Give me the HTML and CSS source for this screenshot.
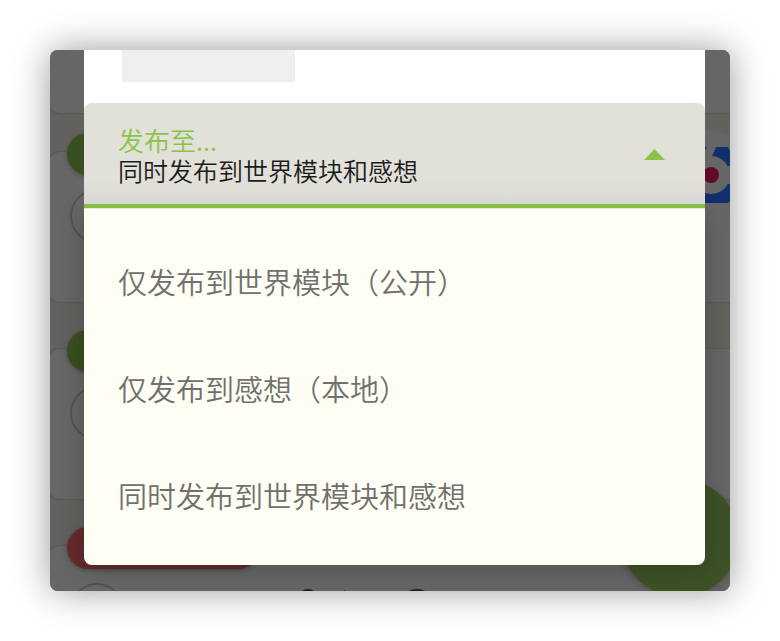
FILE: index.html
```html
<!DOCTYPE html>
<html lang="zh-CN">
<head>
<meta charset="utf-8">
<meta name="viewport" content="width=device-width, initial-scale=1">
<title>发布至</title>
<link rel="stylesheet" href="styles.css">
</head>
<body>
<main class="stage">
  <div class="feed" aria-hidden="true">
    <div class="card card-first"></div>
    <div class="card">
      <span class="chip"></span>
      <span class="avatar"></span>
      <svg class="picture" width="56" height="78" viewBox="0 0 56 78">
        <path fill="#666" d="M0 3Q28 -1 56 8V78H0Z"/>
        <path fill="#102f6b" d="M28 20H33L31 23H28ZM42 20H54L56 24V74L54 76H28V60L36 34Z"/>
        <circle cx="37" cy="48" r="19" fill="#666"/>
        <circle cx="37" cy="48" r="8" fill="#5e0a2a"/>
        <path fill="#666" d="M54 39H56V57H54Z"/>
      </svg>
    </div>
    <div class="card">
      <span class="chip"></span>
      <span class="avatar"></span>
    </div>
    <div class="card">
      <span class="chip chip-red"></span>
      <span class="avatar"></span>
      <svg class="title-tops" width="130" height="8" viewBox="0 0 130 8">
        <ellipse cx="10" cy="5" rx="7" ry="4" fill="#1c2428"/>
        <path d="M46 2L49 4H46Z" fill="#222"/>
        <ellipse cx="119" cy="6" rx="10" ry="5" fill="#222"/>
      </svg>
    </div>
    <span class="fab"></span>
  </div>

  <section class="dialog">
    <div class="sheet"><div class="placeholder"></div></div>
    <button class="field" type="button" aria-haspopup="listbox" aria-expanded="true" aria-controls="targets">
      <span class="field-text">
        <span class="field-label">发布至...</span>
        <span class="field-value">同时发布到世界模块和感想</span>
      </span>
      <svg class="arrow" width="21" height="11" viewBox="0 0 21 11" aria-hidden="true"><path d="M0 11L10.500 0L21 11Z" fill="#8bc34a"/></svg>
    </button>
    <div class="menu" id="targets" role="listbox" aria-label="发布至">
      <button class="option" type="button" role="option">仅发布到世界模块（公开）</button>
      <button class="option" type="button" role="option">仅发布到感想（本地）</button>
      <button class="option" type="button" role="option">同时发布到世界模块和感想</button>
    </div>
  </section>
</main>
</body>
</html>
```
FILE: styles.css
```css
* { box-sizing: border-box; }

body {
  margin: 0;
  padding: 50px;
  background: #fff;
  font-family: "Noto Sans CJK SC", sans-serif;
  font-weight: 350;
}

.stage {
  position: relative;
  padding: 0 25px 26px 34px;
  border-radius: 8px;
  background: #62615d;
  box-shadow: 0 0 36px rgba(0, 0, 0, 0.4);
}

/* Dimmed feed under the dialog */
.feed {
  position: absolute;
  inset: 0;
  display: flex;
  flex-direction: column;
  gap: 47px;
  overflow: hidden;
  border-radius: 8px;
}

.card {
  position: relative;
  flex: none;
  height: 150px;
  margin: 0 -12px 0 -2px;
  border-radius: 12px;
  background: #666;
  box-shadow: 0 0 2px rgba(0, 0, 0, 0.3);
}

.card-first {
  height: 63px;
  margin-bottom: -8px;
  border-radius: 0 0 12px 12px;
}

.chip {
  position: absolute;
  left: 19px;
  top: -19px;
  width: 160px;
  height: 42px;
  border-radius: 21px;
  background: #385020;
  box-shadow: 0 1px 4px rgba(0, 0, 0, 0.3);
}

.chip-red {
  width: 192px;
  background: #632b2e;
}

.avatar {
  position: absolute;
  left: 22px;
  top: 37px;
  width: 54px;
  height: 54px;
  border: 2px solid #535353;
  border-radius: 50%;
}

.picture {
  position: absolute;
  right: 12px;
  top: -25px;
}

.title-tops {
  position: absolute;
  left: 250px;
  top: 42px;
}

.fab {
  position: absolute;
  right: -9px;
  bottom: -6px;
  width: 118px;
  height: 118px;
  border-radius: 50%;
  background: #3d5227;
  box-shadow: 0 2px 8px rgba(0, 0, 0, 0.25);
}

/* Dialog */
.dialog { position: relative; }

.sheet {
  height: 64px;
  margin-bottom: -11px;
  padding: 0 38px;
  background: #fff;
}

.placeholder {
  width: 173px;
  height: 32px;
  background: #efefef;
}

button {
  border: 0;
  font: inherit;
  text-align: left;
}

.field {
  position: relative;
  display: flex;
  align-items: center;
  justify-content: space-between;
  width: 100%;
  height: 105px;
  padding: 2px 40px 0 34px;
  border-bottom: 4px solid #87bd49;
  border-radius: 8px 8px 0 0;
  background: linear-gradient(#e1e1da 75%, #d9d8d3);
}

.field-text {
  display: flex;
  flex-direction: column;
}

.field-label {
  color: #8bc34a;
  font-size: 26px;
  line-height: 30px;
}

.field-value {
  color: #1c1c1a;
  font-size: 25px;
  line-height: 30px;
}

.menu {
  padding: 18px 0 17px;
  border-top: 1px solid #e6eddc;
  border-radius: 0 0 8px 8px;
  background: #fefef5;
  box-shadow: 0 4px 24px rgba(0, 0, 0, 0.22);
}

.option {
  display: block;
  width: 100%;
  height: 107px;
  padding: 0 34px;
  background: transparent;
  color: #70706c;
  font-size: 29px;
}
```
